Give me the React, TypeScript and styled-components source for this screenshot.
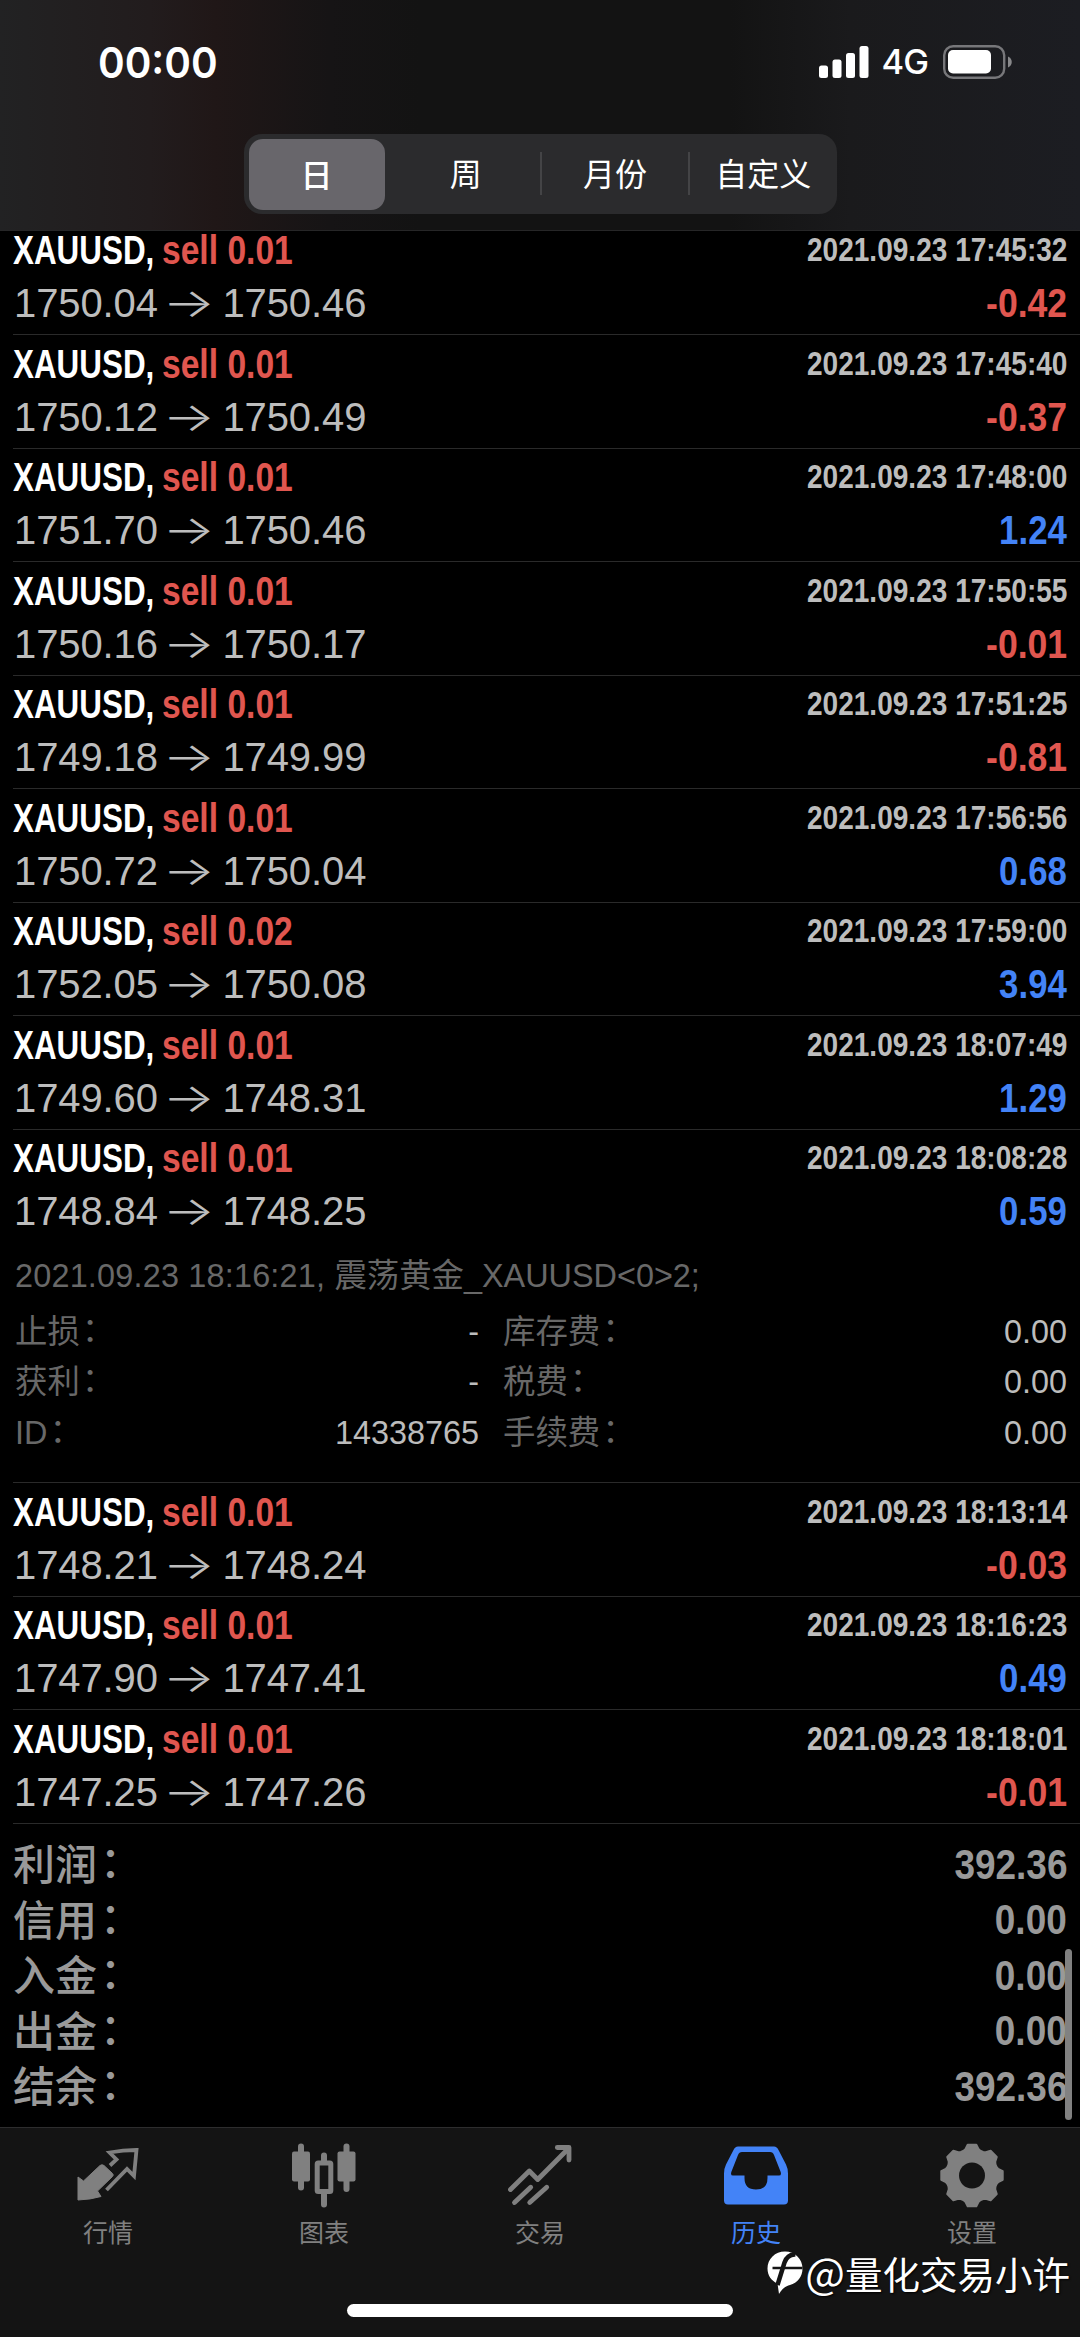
import React from "react";
import styled, { createGlobalStyle } from "styled-components";

const Global = createGlobalStyle`
  body { margin: 0; background: #000; }
  * { box-sizing: border-box; }
`;

const SANS = `"Liberation Sans", "Noto Sans CJK SC", sans-serif`;
const UI = `Inter, "Noto Sans CJK SC", sans-serif`;
const RED = "#e0564f";
const BLUE = "#4383f7";

const Screen = styled.div`
  position: relative;
  display: flex;
  flex-direction: column;
  width: 1080px;
  height: 2337px;
  overflow: hidden;
  background: #000;
  font-family: ${SANS};
`;

const Header = styled.header`
  display: flex;
  flex-direction: column;
  height: 231px;
  flex: none;
  border-bottom: 1px solid #262627;
  background: linear-gradient(90deg, #222223 0, #221c1d 150px, #201717 215px, #161415 330px, #131313 420px, #131313 730px, #1a1a1c 850px, #1c1d22 1080px);
`;

const StatusBar = styled.div`
  display: flex;
  align-items: center;
  justify-content: space-between;
  height: 123px;
  padding: 0 68px 0 98px;
  color: #fff;
  font-family: ${UI};
`;

const Clock = styled.span`
  font-size: 43px;
  font-weight: 600;
  line-height: 52px;
  transform: scaleX(0.94);
  transform-origin: left;
`;

const Indicators = styled.div`
  display: flex;
  align-items: center;
`;

const Network = styled.span`
  margin: 0 15px 0 13px;
  font-size: 34.5px;
  font-weight: 500;
  line-height: 40px;
  letter-spacing: -1px;
`;

const Segments = styled.div`
  display: grid;
  grid-template-columns: repeat(4, 1fr);
  align-self: center;
  width: 593px;
  height: 80px;
  border-radius: 18px;
  margin-top: 11px;
  background: #2b2b2d;
`;

const Segment = styled.button<{ $on?: boolean; $divided?: boolean }>`
  display: flex;
  align-items: center;
  justify-content: center;
  margin: ${(p) => (p.$on ? "5px 7px 4px 5px" : "18px 0 19px")};
  padding: 0 0 3px;
  border: 0;
  border-left: ${(p) => (p.$divided ? "2px solid #444446" : "0")};
  border-radius: ${(p) => (p.$on ? "14px" : "0")};
  background: ${(p) => (p.$on ? "#68666b" : "transparent")};
  color: #fff;
  font: ${(p) => (p.$on ? 500 : 400)} 32px/40px "Noto Sans CJK SC", sans-serif;
`;

const List = styled.main`
  display: flex;
  flex-direction: column;
  flex: none;
  height: 1896px;
`;

const Deal = styled.article<{ $first?: boolean; $open?: boolean }>`
  flex: none;
  height: ${(p) => (p.$open ? "353.5px" : p.$first ? "104px" : "113.55px")};
  padding-top: ${(p) => (p.$first ? "0" : "9.5px")};
  margin-left: 13px;
  padding-right: 13px;
  border-bottom: 1.5px solid #2a2a2a;
`;

const Line = styled.div<{ $h: number }>`
  display: flex;
  align-items: center;
  justify-content: space-between;
  height: ${(p) => p.$h}px;
  white-space: pre;
`;

const Condensed = styled.span<{ $size: number; $x: number; $color: string; $right?: boolean; $w?: number }>`
  display: inline-block;
  ${(p) => (p.$w ? `width: ${p.$w}px;` : "")}
  font-size: ${(p) => p.$size}px;
  font-weight: 700;
  line-height: 1;
  color: ${(p) => p.$color};
  transform: scaleX(${(p) => p.$x});
  transform-origin: ${(p) => (p.$right ? "right" : "left")};
`;

const TitleLine = styled(Line)`
  align-items: flex-start;
  ${Condensed} { line-height: 38px; }
`;

const Group = styled.div`
  display: flex;
  align-items: center;
`;

const Prices = styled.div`
  display: flex;
  align-items: center;
  padding-left: 1px;
  color: #bdbdbd;
  font-size: 40px;
  line-height: 1;
  letter-spacing: -0.1px;
`;

const Arrow = styled.span`
  display: flex;
  justify-content: center;
  width: 64.5px;
  padding-right: 2px;
  font-family: Inter, sans-serif;
  font-weight: 300;
  font-size: 40px;
  line-height: 1;
  transform: scaleX(1.38);
`;

const Details = styled.div`
  padding: 5px 0 0 2px;
  font-size: 32.4px;
`;

const Comment = styled.div`
  height: 58.500px;
  line-height: 56px;
  color: #686868;
  white-space: pre;
`;

const Stamp = styled.span`
  letter-spacing: 0.2px;
`;

const Fields = styled.div`
  display: grid;
  grid-template-columns: 464px 1fr;
  column-gap: 24px;
  grid-auto-rows: 50.3px;
`;

const Field = styled.div`
  display: flex;
  align-items: center;
  justify-content: space-between;
  color: #686868;
  line-height: 50px;
`;

const Colon = styled.span`
  display: inline-block;
  transform: translate(0.07em, -0.06em);
`;

const Value = styled.span`
  color: #bcbcbc;
`;

const Totals = styled.section`
  padding: 13px 13px 0;
`;

const TotalName = styled.span`
  padding-bottom: 5px;
  color: #999;
  font: 500 42px/1 "Noto Sans CJK SC", sans-serif;
`;

const ScrollThumb = styled.div`
  position: absolute;
  left: 1065px;
  top: 1949px;
  width: 7px;
  height: 171px;
  border-radius: 4px;
  background: #818181;
`;

const Footer = styled.footer`
  flex: 1;
  display: flex;
  flex-direction: column;
  align-items: center;
  border-top: 1.5px solid #2d2d2e;
  background: #141414;
`;

const Tabs = styled.nav`
  display: grid;
  grid-template-columns: repeat(5, 1fr);
  width: 100%;
  padding-top: 15px;
`;

const Tab = styled.div<{ $on?: boolean }>`
  display: flex;
  flex-direction: column;
  align-items: center;
  color: ${(p) => (p.$on ? BLUE : "#808080")};
  font: 400 25px/36px "Noto Sans CJK SC", sans-serif;
  svg { display: block; margin-bottom: 4px; }
`;

const HomeIndicator = styled.div`
  width: 386px;
  height: 13px;
  margin-top: 55px;
  border-radius: 7px;
  background: #fff;
`;

const Watermark = styled.div`
  position: absolute;
  right: 10px;
  top: 2246px;
  display: flex;
  align-items: center;
  gap: 2px;
  color: #fff;
  font: 400 37.5px/54px "Noto Sans CJK SC", sans-serif;
  text-shadow: 1px 1px 2px #000;
`;

const At = styled.span`
  font-size: 42px;
  line-height: 1;
`;

type DealData = [lot: string, from: string, to: string, time: string, profit: string];

const DEALS: DealData[] = [
  ["0.01", "1750.04", "1750.46", "17:45:32", "-0.42"],
  ["0.01", "1750.12", "1750.49", "17:45:40", "-0.37"],
  ["0.01", "1751.70", "1750.46", "17:48:00", "1.24"],
  ["0.01", "1750.16", "1750.17", "17:50:55", "-0.01"],
  ["0.01", "1749.18", "1749.99", "17:51:25", "-0.81"],
  ["0.01", "1750.72", "1750.04", "17:56:56", "0.68"],
  ["0.02", "1752.05", "1750.08", "17:59:00", "3.94"],
  ["0.01", "1749.60", "1748.31", "18:07:49", "1.29"],
  ["0.01", "1748.84", "1748.25", "18:08:28", "0.59"],
  ["0.01", "1748.21", "1748.24", "18:13:14", "-0.03"],
  ["0.01", "1747.90", "1747.41", "18:16:23", "0.49"],
  ["0.01", "1747.25", "1747.26", "18:18:01", "-0.01"],
];

const OPEN = 8;

const FIELDS = [
  ["止损", "-"],
  ["库存费", "0.00"],
  ["获利", "-"],
  ["税费", "0.00"],
  ["ID", "14338765"],
  ["手续费", "0.00"],
];

const TOTALS = [
  ["利润", "392.36"],
  ["信用", "0.00"],
  ["入金", "0.00"],
  ["出金", "0.00"],
  ["结余", "392.36"],
];

const Signal = () => (
  <svg width="50" height="32" viewBox="0 0 50 32" fill="#fff">
    <rect x="0" y="19.5" width="9" height="12.5" rx="2.5" />
    <rect x="13.5" y="13.5" width="9" height="18.5" rx="2.5" />
    <rect x="27" y="7" width="9" height="25" rx="2.5" />
    <rect x="40.5" y="0" width="9" height="32" rx="2.5" />
  </svg>
);

const Battery = () => (
  <svg width="69" height="34" viewBox="0 0 69 34">
    <rect x="1.2" y="1.2" width="60" height="31.6" rx="9" fill="none" stroke="#77777a" strokeWidth="2.4" />
    <rect x="5" y="5" width="43" height="23.5" rx="5" fill="#fff" />
    <path d="M65 11.5c5 2 5 9 0 11z" fill="#88888a" />
  </svg>
);

const ArrowsIcon = () => (
  <svg width="64" height="66" viewBox="0 0 64 66" fill="none">
    <path
      d="M2 34l5.500 4L24 22.500q2-1.500 4 0l8.500 8q1.500 1.500 0 3L21.500 48l3.500 5.500q-10 3-23 3.500z"
      fill="currentColor"
      stroke="currentColor"
      strokeLinejoin="round"
    />
    <path d="M34 22.500l6.500-6-7-7Q47 7 60.500 7L58 33l-7-7L30.500 47" stroke="currentColor" strokeWidth="3.800" />
  </svg>
);

const CandlesIcon = () => (
  <svg width="64" height="66" viewBox="0 0 64 66" fill="currentColor">
    <rect x="0" y="8.500" width="18" height="30" rx="2" />
    <rect x="6" y="0.500" width="6" height="47" rx="3" />
    <rect x="45.500" y="8.500" width="18" height="30" rx="2" />
    <rect x="51.500" y="0.500" width="6" height="48.500" rx="3" />
    <rect x="25.200" y="20" width="13.600" height="28.500" rx="1" fill="none" stroke="currentColor" strokeWidth="5" />
    <path d="M32 12.500v5M32 51.500v10" stroke="currentColor" strokeWidth="6" strokeLinecap="round" />
  </svg>
);

const TradeIcon = () => (
  <svg width="64" height="66" viewBox="0 0 64 66" fill="none" stroke="currentColor" strokeWidth="4.800" strokeLinecap="round" strokeLinejoin="round">
    <path d="M2.500 46.500L21.300 28l8.400 8.500L60 6" />
    <path d="M49.300 4.500H61V17" />
    <path d="M6.500 59.500L22.700 44.200M21.700 59.500l17-15.300" />
  </svg>
);

const InboxIcon = () => (
  <svg width="64" height="66" viewBox="0 0 64 66">
    <path
      fill="currentColor"
      fillRule="evenodd"
      d="M14 3.500h36q3 0 4.500 3.500L62 21.500q2 4 2 9v27q0 4-4 4H4q-4 0-4-4v-27q0-5 2-9L9.500 7Q11 3.500 14 3.500zM18 9q-3 0-4 3L7.300 29Q6.300 32.500 9 32.500h11.500V35q0 11.500 11.500 11.500T43.500 35v-2.500H55q2.700 0 1.700-3.500L50 12q-1-3-4-3z"
    />
  </svg>
);

const toothed = () => {
  const pts: string[] = [];
  for (let i = 0; i < 8; i++) {
    const a = (i * Math.PI) / 4;
    for (const [d, r] of [[-0.34, 26], [-0.25, 27], [-0.14, 31], [0.14, 31], [0.25, 27], [0.34, 26]]) {
      pts.push(`${(32 + r * Math.sin(a + d)).toFixed(2)} ${(32.5 - r * Math.cos(a + d)).toFixed(2)}`);
    }
  }
  return `M${pts.join("L")}Z`;
};

const GearIcon = () => (
  <svg width="64" height="66" viewBox="0 0 64 66">
    <path d={toothed()} fill="currentColor" stroke="currentColor" strokeWidth="2" strokeLinejoin="round" />
    <circle cx="32" cy="32.500" r="13" fill="#141414" />
  </svg>
);

const BrandMark = () => (
  <svg width="36" height="44" viewBox="0 0 36 44">
    <path d="M18 0.500C8 0.500 0.500 8 0.500 17.500c0 7 4 12.500 10 15L12 43c3-5 6-7.500 11-9 7.500-2 12.500-8.500 12.500-16.500C35.500 8 28 .5 18 .5z" fill="#fff" />
    <path d="M28.500 3.500q-8-.5-11 8L10.500 34" stroke="#141414" strokeWidth="4.500" fill="none" />
    <path d="M5.500 17h30" stroke="#141414" strokeWidth="2.500" />
  </svg>
);

const TABS = [
  ["行情", ArrowsIcon],
  ["图表", CandlesIcon],
  ["交易", TradeIcon],
  ["历史", InboxIcon],
  ["设置", GearIcon],
] as const;

export default function App() {
  return (
    <Screen>
      <Global />
      <Header>
        <StatusBar>
          <Clock>00:00</Clock>
          <Indicators>
            <Signal />
            <Network>4G</Network>
            <Battery />
          </Indicators>
        </StatusBar>
        <Segments>
          <Segment $on>日</Segment>
          <Segment>周</Segment>
          <Segment $divided>月份</Segment>
          <Segment $divided>自定义</Segment>
        </Segments>
      </Header>
      <List>
        {DEALS.map(([lot, from, to, time, profit], i) => (
          <Deal key={time} $first={i === 0} $open={i === OPEN}>
            <TitleLine $h={40}>
              <Group>
                <Condensed $size={40} $x={0.785} $color="#fff" $w={149}>XAUUSD,</Condensed>
                <Condensed $size={40} $x={0.84} $color={RED}>{`sell ${lot}`}</Condensed>
              </Group>
              <Condensed $size={33} $x={0.85} $color="#bdbdbd" $right>{`2021.09.23 ${time}`}</Condensed>
            </TitleLine>
            <Line $h={64}>
              <Prices>
                {from}
                <Arrow>→</Arrow>
                {to}
              </Prices>
              {profit.startsWith("-") ? (
                <Condensed $size={40} $x={0.89} $color={RED} $right>{profit}</Condensed>
              ) : (
                <Condensed $size={40} $x={0.87} $color={BLUE} $right>{profit}</Condensed>
              )}
            </Line>
            {i === OPEN && (
              <Details>
                <Comment>
                  <Stamp>2021.09.23 18:16:21, </Stamp>震荡黄金_XAUUSD&lt;0&gt;2;
                </Comment>
                <Fields>
                  {FIELDS.map(([name, value]) => (
                    <Field key={name}>
                      <span>{name}<Colon>：</Colon></span>
                      <Value>{value}</Value>
                    </Field>
                  ))}
                </Fields>
              </Details>
            )}
          </Deal>
        ))}
        <Totals>
          {TOTALS.map(([name, value]) => (
            <Line $h={55.5} key={name}>
              <TotalName>{name}<Colon>：</Colon></TotalName>
              <Condensed $size={42} $x={0.88} $color="#999" $right>{value}</Condensed>
            </Line>
          ))}
        </Totals>
      </List>
      <Footer>
        <Tabs>
          {TABS.map(([label, Icon], i) => (
            <Tab key={label} $on={i === 3}>
              <Icon />
              {label}
            </Tab>
          ))}
        </Tabs>
        <HomeIndicator />
      </Footer>
      <ScrollThumb />
      <Watermark>
        <BrandMark />
        <span><At>@</At>量化交易小许</span>
      </Watermark>
    </Screen>
  );
}
